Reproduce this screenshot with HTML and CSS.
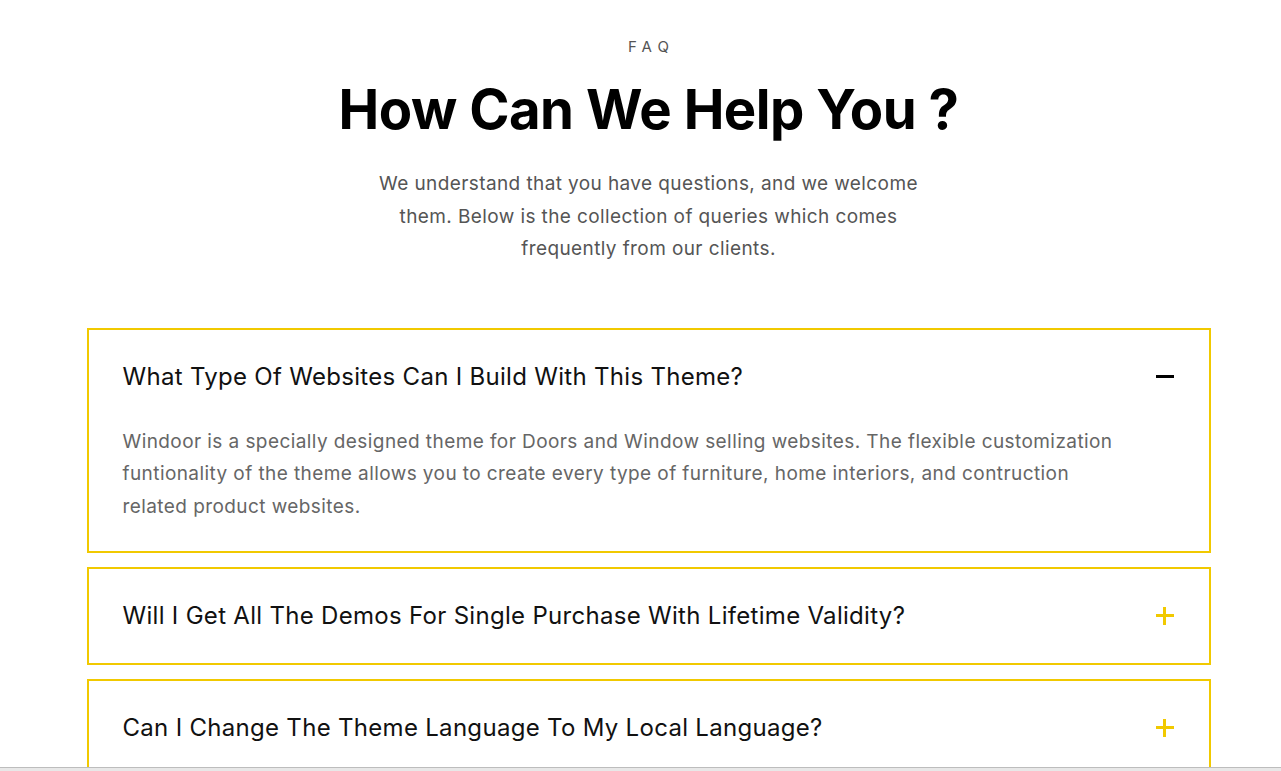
FILE: index.html
```html
<!DOCTYPE html>
<html lang="en">
<head>
<meta charset="utf-8">
<title>FAQ</title>
<link rel="stylesheet" href="styles.css">
</head>
<body>
<section class="faq">
  <div class="faq-head">
    <div class="eyebrow">FAQ</div>
    <h1 class="title">How Can We Help You ?</h1>
    <p class="lead">We understand that you have questions, and we welcome them. Below is the collection of queries which comes frequently from our clients.</p>
  </div>
  <div class="faq-list">
    <div class="item open">
      <div class="q">
        <span class="q-text">What Type Of Websites Can I Build With This Theme?</span>
        <span class="icon minus"></span>
      </div>
      <div class="a">Windoor is a specially designed theme for Doors and Window selling websites. The flexible customization funtionality of the theme allows you to create every type of furniture, home interiors, and contruction related product websites.</div>
    </div>
    <div class="item">
      <div class="q">
        <span class="q-text">Will I Get All The Demos For Single Purchase With Lifetime Validity?</span>
        <span class="icon plus"></span>
      </div>
    </div>
    <div class="item">
      <div class="q">
        <span class="q-text">Can I Change The Theme Language To My Local Language?</span>
        <span class="icon plus"></span>
      </div>
    </div>
  </div>
</section>
<div class="hscroll"></div>
</body>
</html>
```

FILE: styles.css
```css
* { box-sizing: border-box; }
html, body { margin: 0; padding: 0; background: #fff; }
body {
  font-family: Inter, "Noto Sans", sans-serif;
  color: #111;
  height: 771px;
  overflow: hidden;
}
.faq { padding-top: 37px; width: 1297px; }
.faq-head { text-align: center; }
.eyebrow {
  font-size: 15px;
  line-height: 20px;
  letter-spacing: 6px;
  color: #555;
  padding-left: 6px;
}
.title {
  margin: 20px 0 0;
  font-size: 54.5px;
  line-height: 64px;
  font-weight: 700;
  color: #000;
  letter-spacing: -0.5px;
}
.lead {
  margin: 27px auto 0;
  width: 575px;
  font-size: 19px;
  line-height: 32.5px;
  letter-spacing: 0.4px;
  color: #555;
}
.faq-list {
  width: 1124px;
  margin: 62px auto 0;
  display: flex;
  flex-direction: column;
  gap: 14px;
}
.item { border: 2px solid #f1c900; }
.q {
  display: flex;
  align-items: center;
  justify-content: space-between;
  padding: 32px 35px 32px 34px;
}
.q-text {
  font-size: 24px;
  line-height: 30px;
  letter-spacing: 0.3px;
  color: #111;
}
.icon {
  width: 18px;
  height: 18px;
  position: relative;
  flex: none;
}
.icon::before, .icon::after {
  content: "";
  position: absolute;
  background: currentColor;
}
.icon::before { left: 0; right: 0; top: 7px; height: 3px; }
.minus { color: #000; }
.minus::after { display: none; }
.plus { color: #f1c900; }
.plus::after { top: 0; bottom: 0; left: 7px; width: 3px; }
.a {
  padding: 2px 80px 27.5px 34px;
  font-size: 19px;
  line-height: 32.5px;
  letter-spacing: 0.42px;
  color: #666;
}
.hscroll {
  position: fixed;
  left: 0; right: 0; bottom: 0;
  height: 4px;
  background: #e8e8e8;
  border-top: 1px solid #bdbdbd;
}
```
